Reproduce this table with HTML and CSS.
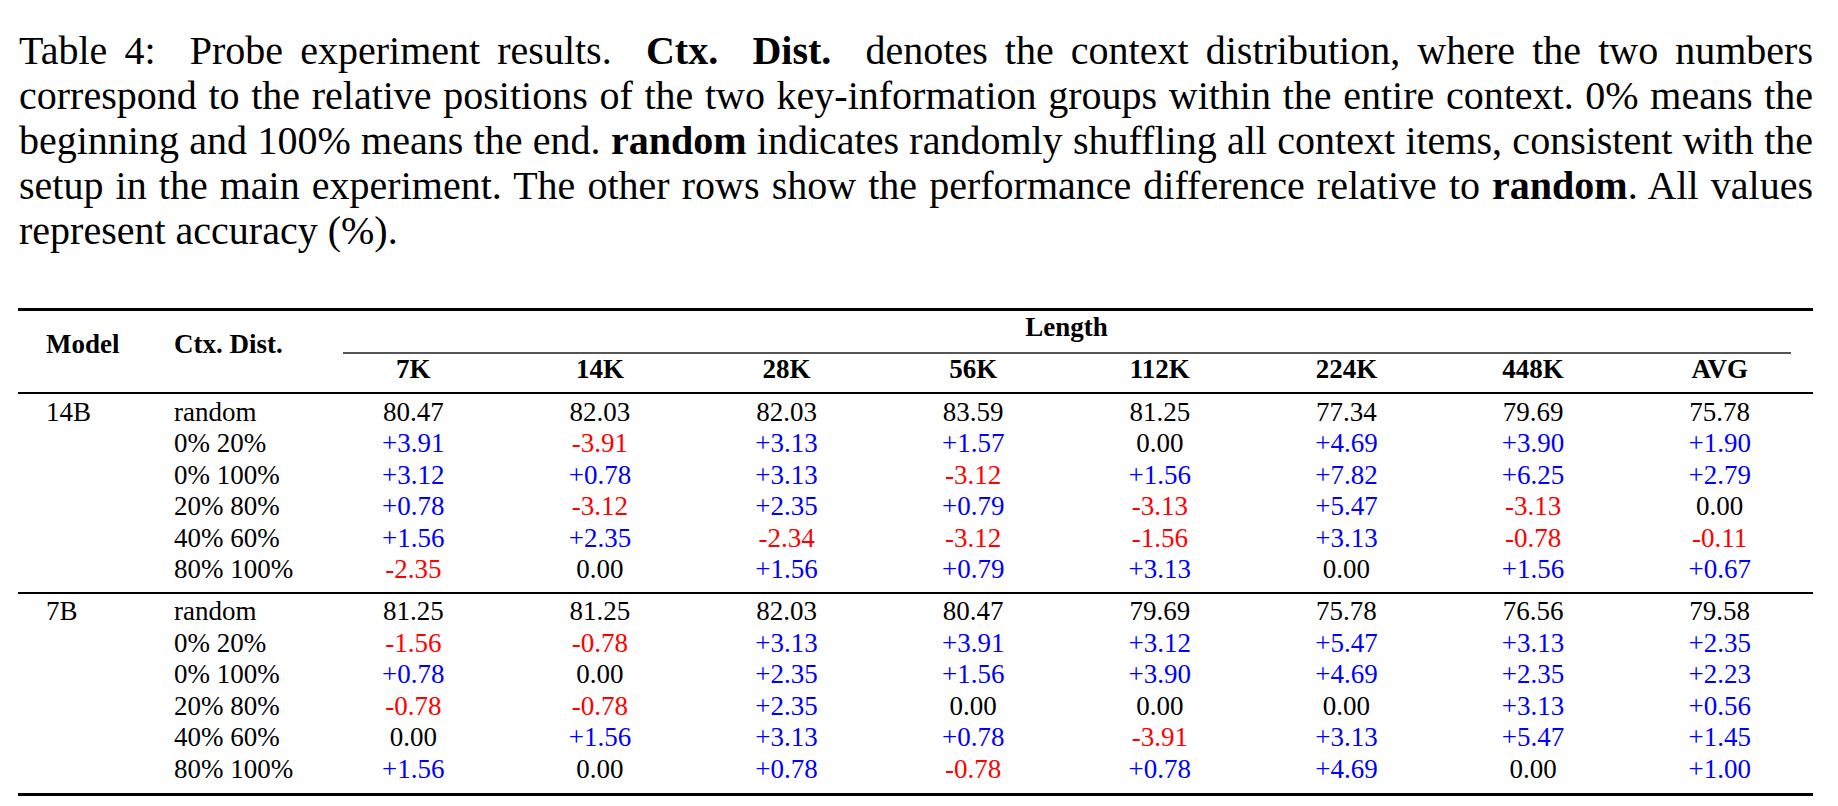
FILE: index.html
```html
<!DOCTYPE html>
<html lang="en">
<head>
<meta charset="utf-8">
<title>Table 4: Probe experiment results</title>
<link rel="stylesheet" href="styles.css">
</head>
<body>
<div class="page">
  <p class="caption">
    <span class="cap-line">Table 4:&nbsp; Probe experiment results.&nbsp; <b>Ctx.&nbsp; Dist.</b>&nbsp; denotes the context distribution, where the two numbers</span>
    <span class="cap-line">correspond to the relative positions of the two key-information groups within the entire context. 0% means the</span>
    <span class="cap-line">beginning and 100% means the end. <b>random</b> indicates randomly shuffling all context items, consistent with the</span>
    <span class="cap-line">setup in the main experiment. The other rows show the performance difference relative to <b>random</b>. All values</span>
    <span class="cap-line last">represent accuracy (%).</span>
  </p>

  <div class="table">
    <div class="rule-heavy"></div>
    <div class="thead">
      <div class="th th-model">Model</div>
      <div class="th th-ctx">Ctx. Dist.</div>
      <div class="th th-length">Length</div>
      <div class="cmid"></div>
      <div class="th th-col">7K</div>
      <div class="th th-col">14K</div>
      <div class="th th-col">28K</div>
      <div class="th th-col">56K</div>
      <div class="th th-col">112K</div>
      <div class="th th-col">224K</div>
      <div class="th th-col">448K</div>
      <div class="th th-col">AVG</div>
    </div>
    <div class="rule-mid"></div>

    <div class="tgroup first">
      <div class="c-model">14B</div><div class="c-ctx">random</div>
      <div class="c-num">80.47</div><div class="c-num">82.03</div><div class="c-num">82.03</div><div class="c-num">83.59</div><div class="c-num">81.25</div><div class="c-num">77.34</div><div class="c-num">79.69</div><div class="c-num">75.78</div>

      <div class="c-model"></div><div class="c-ctx">0% 20%</div>
      <div class="c-num pos">+3.91</div><div class="c-num neg">-3.91</div><div class="c-num pos">+3.13</div><div class="c-num pos">+1.57</div><div class="c-num">0.00</div><div class="c-num pos">+4.69</div><div class="c-num pos">+3.90</div><div class="c-num pos">+1.90</div>

      <div class="c-model"></div><div class="c-ctx">0% 100%</div>
      <div class="c-num pos">+3.12</div><div class="c-num pos">+0.78</div><div class="c-num pos">+3.13</div><div class="c-num neg">-3.12</div><div class="c-num pos">+1.56</div><div class="c-num pos">+7.82</div><div class="c-num pos">+6.25</div><div class="c-num pos">+2.79</div>

      <div class="c-model"></div><div class="c-ctx">20% 80%</div>
      <div class="c-num pos">+0.78</div><div class="c-num neg">-3.12</div><div class="c-num pos">+2.35</div><div class="c-num pos">+0.79</div><div class="c-num neg">-3.13</div><div class="c-num pos">+5.47</div><div class="c-num neg">-3.13</div><div class="c-num">0.00</div>

      <div class="c-model"></div><div class="c-ctx">40% 60%</div>
      <div class="c-num pos">+1.56</div><div class="c-num pos">+2.35</div><div class="c-num neg">-2.34</div><div class="c-num neg">-3.12</div><div class="c-num neg">-1.56</div><div class="c-num pos">+3.13</div><div class="c-num neg">-0.78</div><div class="c-num neg">-0.11</div>

      <div class="c-model"></div><div class="c-ctx">80% 100%</div>
      <div class="c-num neg">-2.35</div><div class="c-num">0.00</div><div class="c-num pos">+1.56</div><div class="c-num pos">+0.79</div><div class="c-num pos">+3.13</div><div class="c-num">0.00</div><div class="c-num pos">+1.56</div><div class="c-num pos">+0.67</div>
    </div>
    <div class="rule-mid"></div>

    <div class="tgroup last">
      <div class="c-model">7B</div><div class="c-ctx">random</div>
      <div class="c-num">81.25</div><div class="c-num">81.25</div><div class="c-num">82.03</div><div class="c-num">80.47</div><div class="c-num">79.69</div><div class="c-num">75.78</div><div class="c-num">76.56</div><div class="c-num">79.58</div>

      <div class="c-model"></div><div class="c-ctx">0% 20%</div>
      <div class="c-num neg">-1.56</div><div class="c-num neg">-0.78</div><div class="c-num pos">+3.13</div><div class="c-num pos">+3.91</div><div class="c-num pos">+3.12</div><div class="c-num pos">+5.47</div><div class="c-num pos">+3.13</div><div class="c-num pos">+2.35</div>

      <div class="c-model"></div><div class="c-ctx">0% 100%</div>
      <div class="c-num pos">+0.78</div><div class="c-num">0.00</div><div class="c-num pos">+2.35</div><div class="c-num pos">+1.56</div><div class="c-num pos">+3.90</div><div class="c-num pos">+4.69</div><div class="c-num pos">+2.35</div><div class="c-num pos">+2.23</div>

      <div class="c-model"></div><div class="c-ctx">20% 80%</div>
      <div class="c-num neg">-0.78</div><div class="c-num neg">-0.78</div><div class="c-num pos">+2.35</div><div class="c-num">0.00</div><div class="c-num">0.00</div><div class="c-num">0.00</div><div class="c-num pos">+3.13</div><div class="c-num pos">+0.56</div>

      <div class="c-model"></div><div class="c-ctx">40% 60%</div>
      <div class="c-num">0.00</div><div class="c-num pos">+1.56</div><div class="c-num pos">+3.13</div><div class="c-num pos">+0.78</div><div class="c-num neg">-3.91</div><div class="c-num pos">+3.13</div><div class="c-num pos">+5.47</div><div class="c-num pos">+1.45</div>

      <div class="c-model"></div><div class="c-ctx">80% 100%</div>
      <div class="c-num pos">+1.56</div><div class="c-num">0.00</div><div class="c-num pos">+0.78</div><div class="c-num neg">-0.78</div><div class="c-num pos">+0.78</div><div class="c-num pos">+4.69</div><div class="c-num">0.00</div><div class="c-num pos">+1.00</div>
    </div>
    <div class="rule-heavy"></div>
  </div>
</div>
</body>
</html>
```

FILE: styles.css
```css
html, body {
  margin: 0;
  padding: 0;
  background: #ffffff;
}

body {
  font-family: "Liberation Serif", "Times New Roman", serif;
  color: #000000;
}

.page {
  width: 1795px;
  margin-left: 18px;
  padding-top: 28px;
}

.caption {
  margin: 0;
  padding-left: 1px;
  font-size: 40px;
  line-height: 45px;
}

.cap-line {
  display: block;
  text-align: justify;
  text-align-last: justify;
}

.cap-line.last {
  text-align-last: left;
}

.table {
  margin-top: 55px;
  font-size: 27px;
  line-height: 31.5px;
}

.rule-heavy {
  height: 3px;
  background: #000000;
}

.rule-mid {
  height: 2px;
  background: #000000;
}

.thead,
.tgroup {
  display: grid;
  grid-template-columns: 156px 146px repeat(8, 1fr);
}

.thead {
  padding: 1px 0 6.5px;
  grid-template-rows: auto auto auto;
}

.th {
  font-weight: bold;
}

.th-model {
  grid-column: 1;
  grid-row: 1 / 4;
  padding: 17px 0 0 28px;
}

.th-ctx {
  grid-column: 2;
  grid-row: 1 / 4;
  padding-top: 17px;
}

.th-length {
  grid-column: 3 / -1;
  grid-row: 1;
  text-align: center;
}

.cmid {
  grid-column: 3 / -1;
  grid-row: 2;
  height: 2px;
  margin: 8px 22px 0.5px 23px;
  background: #555555;
}

.th-col {
  grid-row: 3;
  text-align: center;
}

.tgroup.first {
  padding: 2.5px 0 6.5px;
}

.tgroup.last {
  padding: 2px 0 8px;
}

.c-model {
  padding-left: 28px;
}

.c-num {
  text-align: center;
}

.pos {
  color: #0000ff;
}

.neg {
  color: #ff0000;
}
```
